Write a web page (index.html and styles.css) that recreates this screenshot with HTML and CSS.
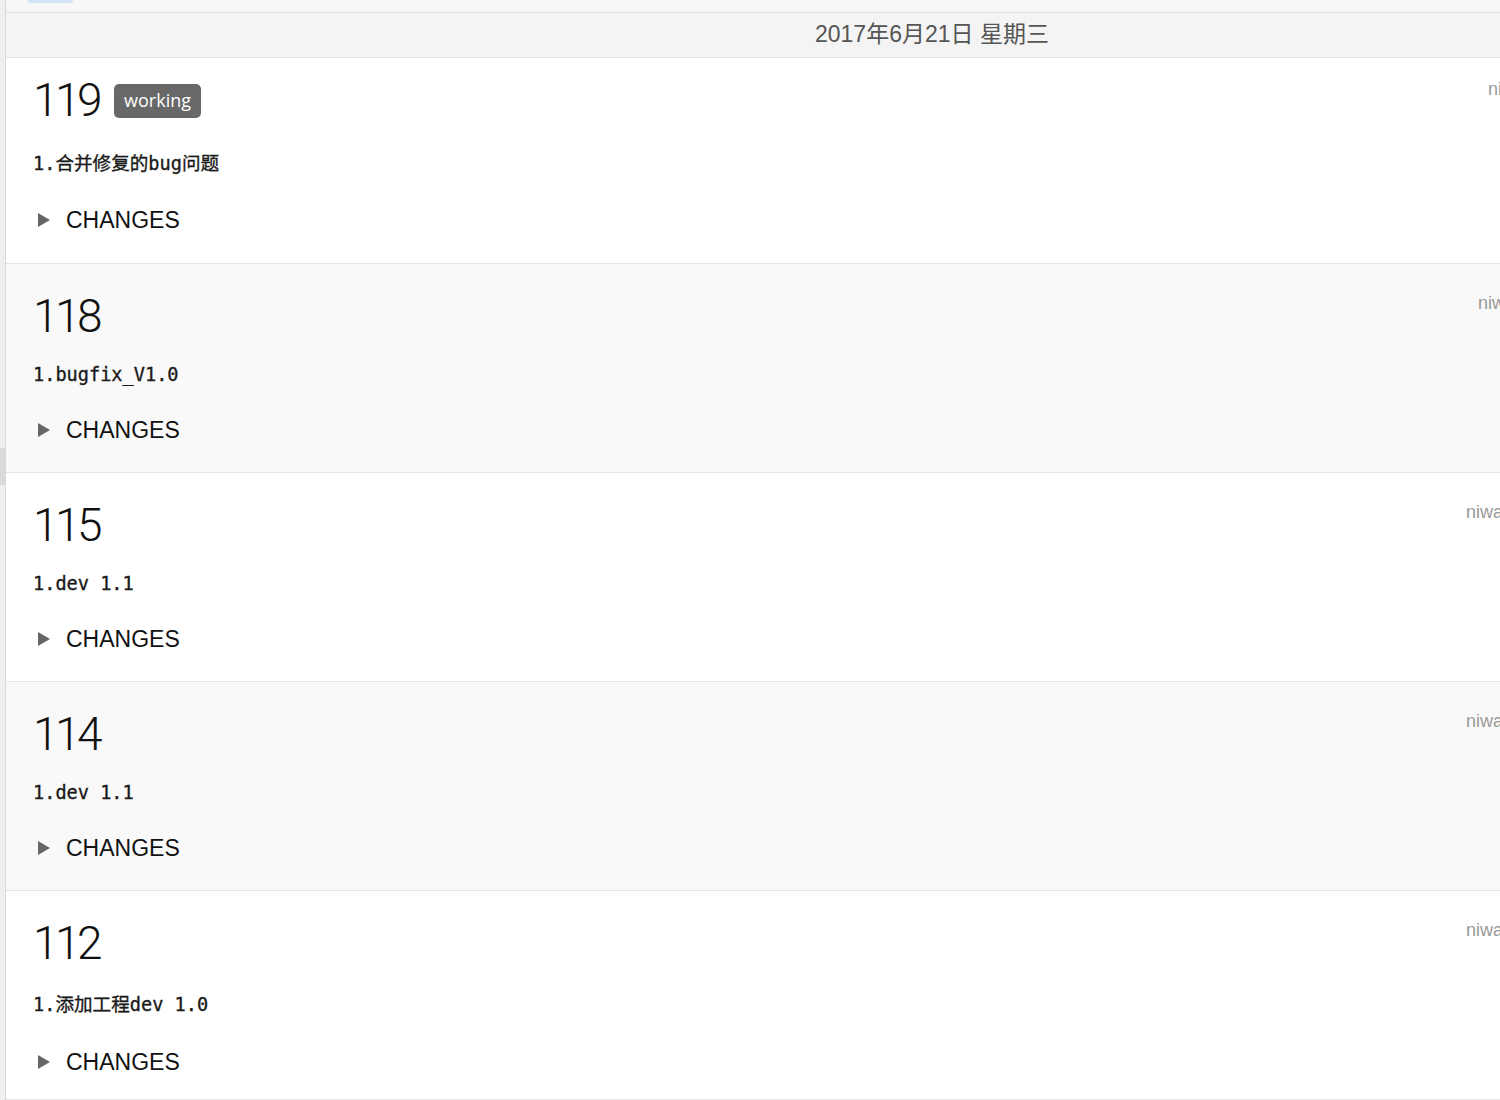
FILE: index.html
```html
<!DOCTYPE html>
<html lang="zh-CN">
<head>
<meta charset="utf-8">
<title>Builds</title>
<link rel="stylesheet" href="styles.css">
</head>
<body>
<div class="page">
  <div class="rail"><div class="rail-thumb"></div></div>
  <div class="main">
    <div class="topbar"><span class="pill"></span></div>
    <div class="date-header">2017年6月21日 星期三</div>
    <div class="builds">
      <div class="build first">
        <div class="build-body">
          <div class="build-title"><span class="num">119</span><span class="badge">working</span></div>
          <div class="desc">1.合并修复的bug问题</div>
          <div class="changes"><span class="tri"></span>CHANGES</div>
        </div>
        <div class="author author-1">niwatori</div>
      </div>
      <div class="build alt">
        <div class="build-body">
          <div class="build-title"><span class="num">118</span></div>
          <div class="desc">1.bugfix_V1.0</div>
          <div class="changes"><span class="tri"></span>CHANGES</div>
        </div>
        <div class="author author-2">niwatori</div>
      </div>
      <div class="build">
        <div class="build-body">
          <div class="build-title"><span class="num">115</span></div>
          <div class="desc">1.dev 1.1</div>
          <div class="changes"><span class="tri"></span>CHANGES</div>
        </div>
        <div class="author author-3">niwatori</div>
      </div>
      <div class="build alt">
        <div class="build-body">
          <div class="build-title"><span class="num">114</span></div>
          <div class="desc">1.dev 1.1</div>
          <div class="changes"><span class="tri"></span>CHANGES</div>
        </div>
        <div class="author author-3">niwatori</div>
      </div>
      <div class="build last">
        <div class="build-body">
          <div class="build-title"><span class="num">112</span></div>
          <div class="desc">1.添加工程dev 1.0</div>
          <div class="changes"><span class="tri"></span>CHANGES</div>
        </div>
        <div class="author author-3">niwatori</div>
      </div>
    </div>
  </div>
</div>
</body>
</html>
```

FILE: styles.css
```css
html, body {
  margin: 0;
  padding: 0;
  background: #ffffff;
  overflow: hidden;
}
body {
  font-family: "Liberation Sans", Arial, "Noto Sans CJK SC", sans-serif;
  width: 1500px;
  height: 1100px;
}
.page {
  display: flex;
  height: 1100px;
  overflow: hidden;
}
.rail {
  width: 6px;
  flex: none;
  background: #efefef;
  border-right: 1px solid #d9d9d9;
  display: flex;
  flex-direction: column;
  padding-top: 448px;
  box-sizing: border-box;
}
.rail-thumb {
  height: 37px;
  background: #dadada;
}
.main {
  flex: 1;
  min-width: 0;
  overflow: hidden;
}
.topbar {
  height: 12px;
  background: #f7f7f7;
  border-bottom: 1px solid #e2e2e2;
  padding-left: 21px;
}
.pill {
  display: block;
  width: 46px;
  height: 3px;
  background: #d4e4f6;
  border-radius: 0 0 6px 6px;
}
.date-header {
  height: 44px;
  line-height: 42px;
  background: #f4f4f4;
  border-bottom: 1px solid #e4e4e4;
  padding-left: 809px;
  font-size: 23px;
  color: #555555;
}
.build {
  display: flex;
  height: 209px;
  box-sizing: border-box;
  border-bottom: 1px solid #e4e4e4;
  background: #ffffff;
}
.build.first {
  height: 206px;
}
.build.alt {
  background: #f9f9f9;
}
.build-body {
  flex: 1;
  padding-left: 27px;
  padding-top: 27px;
}
.build.first .build-body {
  padding-top: 17px;
}
.build-title {
  display: flex;
  align-items: center;
  gap: 15px;
  height: 50px;
}
.num {
  font-family: Roboto, "Liberation Sans", sans-serif;
  font-size: 46px;
  color: #111111;
  font-weight: 300;
  letter-spacing: -3.5px;
  line-height: 50px;
}
.badge {
  font-family: "Open Sans", "Liberation Sans", sans-serif;
  background: #686868;
  color: #ffffff;
  font-size: 18px;
  height: 34px;
  line-height: 33px;
  padding: 0 10px;
  border-radius: 5px;
  margin-top: 2px;
}
.desc {
  margin-top: 23px;
  font-family: "DejaVu Sans Mono", "Liberation Mono", "Noto Sans CJK SC", monospace;
  font-size: 18.6px;
  line-height: 22px;
  color: #1a1a1a;
  font-weight: normal;
  -webkit-text-stroke: 0.35px #1a1a1a;
}
.build.first .desc {
  margin-top: 28px;
}
.build.last .desc {
  margin-top: 26px;
}
.changes {
  margin-top: 31px;
  display: flex;
  align-items: center;
  font-size: 23px;
  color: #111111;
  line-height: 26px;
}
.build.first .changes {
  margin-top: 32px;
}
.build.last .changes {
  margin-top: 33px;
}
.tri {
  width: 0;
  height: 0;
  border-top: 7px solid transparent;
  border-bottom: 7px solid transparent;
  border-left: 12px solid #666666;
  margin-left: 5px;
  margin-right: 16px;
}
.author {
  flex: none;
  font-size: 18px;
  color: #999999;
  white-space: nowrap;
  overflow: hidden;
  padding-top: 29px;
}
.author-1 { width: 12px; padding-top: 21px; }
.author-2 { width: 22px; }
.author-3 { width: 34px; }
```
